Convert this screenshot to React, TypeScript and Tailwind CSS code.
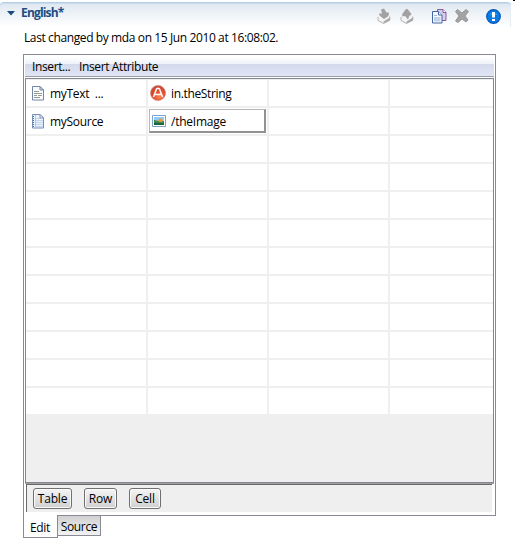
import React from "react";

const PageIcon = () => (
  <svg width="14" height="15" viewBox="0 0 14 15">
    <path d="M1.500.5h7.500l3.500 3.500v10h-11z" fill="#fbfcfe" stroke="#7486a6" />
    <path d="M9 .5V4h3.500z" fill="#dce5f2" stroke="#7486a6" />
    <path d="M3 5.500h5M3 7.500h8M3 9.500h3M7 9.500h4M3 11.500h6" stroke="#949c90" />
  </svg>
);

const NotebookIcon = () => (
  <svg width="14" height="15" viewBox="0 0 14 15">
    <path d="M1.500.5h7.500l3.500 3.500v10h-11z" fill="#eef5ff" stroke="#7990b6" />
    <path d="M9 .5V4h3.500z" fill="#fff" stroke="#7990b6" />
    <path d="M4 4.500h5M5 6.500h7M5 8.500h7M5 10.500h7M5 12.500h7" stroke="#bed5ef" />
    <path d="M4.500 1v13" stroke="#edb5ac" />
    <path d="M2.500 2v12" stroke="#4d699b" strokeDasharray="1 1" />
  </svg>
);

const AttributeIcon = () => (
  <svg width="16" height="16" viewBox="0 0 16 16">
    <defs>
      <radialGradient id="orange" cx=".6" cy=".75" r=".8">
        <stop offset="0" stopColor="#ff8051" />
        <stop offset=".55" stopColor="#e4482a" />
        <stop offset="1" stopColor="#bd493d" />
      </radialGradient>
    </defs>
    <circle cx="8" cy="8" r="7.500" fill="url(#orange)" stroke="#c98370" strokeWidth=".7" />
    <path d="M3.500 12 6.500 4q1.500-1.400 3 0l3 8M5 9.500h6" fill="none" stroke="#fff" strokeWidth="1.500" />
  </svg>
);

const ImageIcon = () => (
  <svg width="14" height="12" viewBox="0 0 14 12">
    <path d="M.5.5h13v11H.5z" fill="#fff" stroke="#7ba2cb" />
    <path d="M2 2h10v8H2z" fill="#8dccff" />
    <path d="M2 5c3 0 4 2 10 1v4H2z" fill="#438a4c" />
    <path d="M2 8c4-1 5 1 10 0v2H2z" fill="#1d633c" />
    <ellipse cx="8.500" cy="5.200" rx="2.200" ry="1.700" fill="#f29a35" />
  </svg>
);

const BoxArrowIcon = ({ up = false }: { up?: boolean }) => (
  <svg width="14" height="16" viewBox="0 0 14 16">
    <path d="M1 9v3.500L6.500 15.500 13 12V8.500L11 7.500 7 11 3 8z" fill="#f4f4f4" />
    <path d="M1 9v3.500L6.500 15.500 12.800 12V8.500" fill="none" stroke="#b2b2b2" />
    <path d="M6.500 13.500 13 9.500v3l-6.500 3z" fill="#a9a9a9" />
    {up ? (
      <path d="M6 1h1.500l4 5-1 1.500H9.500L8 11.500 5 8 2 8.500 2.500 5.500z" fill="#a2a2a2" />
    ) : (
      <path d="M4 1.500 7 .5l2.500 4H12L11.500 8 7 11 2.500 7.500 2 5.500h3z" fill="#a2a2a2" />
    )}
  </svg>
);

const CopyIcon = () => (
  <svg width="15" height="15" viewBox="0 0 15 15">
    <path d="M5.500.5h5.500l3 3v8h-8.500z" fill="#d9cce9" stroke="#8061a3" />
    <path d="M11 .5v3h3" fill="#fff" stroke="#8061a3" />
    <path d="M.5 2.500h6l3.500 3.500v8h-9.500z" fill="#f5f9ff" stroke="#4267a5" />
    <path d="M6.500 2.500V6H10" fill="#fff" stroke="#4267a5" />
    <path d="M2 6.500h3" stroke="#a3b8da" />
    <path d="M2 8h6.500v4.500H2z" fill="#c4d2e9" />
  </svg>
);

const rows = [
  [<PageIcon />, "myText  ...", <AttributeIcon />, "in.theString"],
  [<NotebookIcon />, "mySource", <ImageIcon />, "/theImage"],
  ...Array.from({ length: 10 }, () => [] as React.ReactNode[]),
];

export default function App() {
  return (
    <div className="relative flex h-[541px] w-[515px] flex-col overflow-hidden bg-white font-['Open_Sans','Noto_Sans',sans-serif] text-[12px] leading-4 text-black">
      <div className="absolute right-0 top-0 h-px w-[2px] bg-black" />
      <header className="mt-[2px] flex h-[25px] w-[511px] shrink-0 items-start rounded-t-[4px] border-t border-[#b3cee6] bg-linear-to-b from-[#dfe8f0] to-white shadow-[inset_0_1px_0_#c8dced,inset_-1px_0_0_#e4edf6]">
        <svg className="ml-[7px] mt-[8px]" width="8" height="5" viewBox="0 0 8 5"><path d="M0 0h8L4 4.500z" fill="#174a81" /></svg>
        <span className="ml-[6px] mt-[2px] font-bold tracking-[-0.82px] text-[#1d4d82]">English*</span>
        <div className="ml-auto mr-[10px] mt-[5px] flex h-[16px] items-center">
          <BoxArrowIcon />
          <span className="w-[9px]" />
          <BoxArrowIcon up />
          <span className="w-[18px]" />
          <CopyIcon />
          <span className="w-[8px]" />
          <svg width="14" height="14" viewBox="0 0 14 14"><path d="M.5 2.500 2.500.5 7 4l4-3.500 2.500 2L10 7l3 4-2 2-4-3-4 3.500-2.500-1.500L4 7z" fill="#a3a3a3" stroke="#929292" strokeWidth=".9" /></svg>
          <span className="w-[17px]" />
          <svg width="15" height="15" viewBox="0 0 15 15"><circle cx="7.500" cy="7.500" r="6.800" fill="#087be3" stroke="#0757ba" strokeWidth="1.200" /><path d="M3 6a5 4 0 0 1 9 0z" fill="#2c94f1" /><path d="M6 3h3v5.500H6zM6 10h3v2H6z" fill="#fff" /></svg>
        </div>
      </header>
      <p className="ml-6 mt-[3px] h-[24px] shrink-0 whitespace-nowrap tracking-[-0.39px]">Last changed by mda on 15 Jun 2010 at 16:08:02.</p>
      <main className="ml-[23px] flex h-[462px] w-[473px] shrink-0 flex-col border border-[#898a93] pl-px pr-px pt-[2px]">
        <nav className="flex h-[20px] shrink-0 gap-[8px] border-b border-[#999da6] bg-[linear-gradient(to_bottom,#fff_0px,#edf2f9_7px,#d3d9eb_7px,#e1e6f6_19px)] pl-[7px] pt-[2px]">
          <span className="w-[39px] whitespace-nowrap tracking-[-0.38px]">Insert...</span>
          <span className="whitespace-nowrap tracking-[-0.38px]">Insert Attribute</span>
        </nav>
        <section className="mt-px h-[405px] shrink-0 border border-[#828790] bg-[#efefef]">
          {rows.map((row, i) => (
            <div key={i} className={"grid grid-cols-[120px_119px_119px_1fr] gap-x-[2px] border-b-2 border-[#efefef] " + (i === 0 ? "h-[29px] border-t" : "h-[28px]")}>
              <div className="flex items-center whitespace-pre bg-white">
                {row[0] && <><span className="ml-[5px] w-[14px]">{row[0]}</span><span className="ml-[5px] mt-[2px] tracking-[-0.3px]">{row[1]}</span></>}
              </div>
              <div className="flex items-center bg-white">
                {i === 0 && <><span className="ml-[2px]">{row[2]}</span><span className="ml-[5px] mt-[2px] tracking-[-0.35px]">{row[3]}</span></>}
                {i === 1 && <div className="ml-px flex h-[24px] w-[117px] items-center border border-b-2 border-r-2 border-b-[#929292] border-l-[#b5b5b5] border-r-[#929292] border-t-[#b5b5b5]"><span className="ml-[2px]">{row[2]}</span><span className="ml-[5px] mt-[2px] tracking-[-0.25px]">{row[3]}</span></div>}
              </div>
              <div className="bg-white" />
              <div className="bg-white" />
            </div>
          ))}
        </section>
        <div className="h-px shrink-0 bg-[#a0a0a0]" />
        <footer className="ml-px mr-[2px] flex h-[28px] shrink-0 gap-[12px] border-l border-t border-[#696969] bg-[#efefef] pl-[6px] pt-[3px]">
          {[["Table", "w-[39px]"], ["Row", "w-[33px]"], ["Cell", "w-[32px]"]].map(([label, width]) => (
            <button key={label} className={"h-[21px] rounded-[3px] border border-[#707070] bg-linear-to-b from-[#f5f5f5] to-[#d0d0d0] p-0 tracking-[-0.2px] shadow-[inset_0_0_0_1px_#fafafa] " + width}>{label}</button>
          ))}
        </footer>
      </main>
      <div className="ml-[23px] flex items-start">
        <div className="-mt-px flex h-[23px] w-[35px] items-center justify-center border border-t-0 border-[#898a93] bg-white pr-px pt-[3px] tracking-[-0.3px]">Edit</div>
        <div className="-ml-px flex h-[20px] w-[44px] items-center justify-center border border-t-0 border-[#898a93] bg-linear-to-b from-[#d1d1d1] to-[#f2f2f2] pt-[3px] tracking-[-0.34px]">Source</div>
      </div>
    </div>
  );
}
